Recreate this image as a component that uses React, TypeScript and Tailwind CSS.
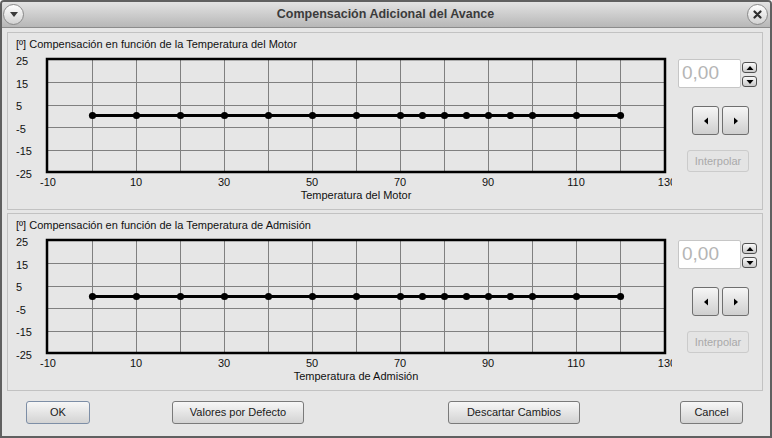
import React from 'react';

const FONT = { fontFamily: '"Liberation Sans", Arial, sans-serif' };
const POINTS = [0, 10, 20, 30, 40, 50, 60, 70, 75, 80, 85, 90, 95, 100, 110, 120];
const GRID_X = [0, 10, 20, 30, 40, 50, 60, 70, 80, 90, 100, 110, 120];
const LABELS_X = [-10, 10, 30, 50, 70, 90, 110, 130];
const LABELS_Y = [25, 15, 5, -5, -15, -25];

const px = (v: number) => 40 + (v + 10) * 4.4;
const py = (v: number) => 64.75 - v * 2.25;

function Chart({ axisTitle }: { axisTitle: string }) {
  return (
    <svg width={664} height={158} className="block" style={FONT}>
      {GRID_X.map((v) => (
        <line key={v} x1={px(v) + 0.5} x2={px(v) + 0.5} y1={8} y2={121} stroke="#808080" strokeWidth={1} />
      ))}
      {[15, 5, -5, -15].map((v) => (
        <line key={v} x1={40} x2={657} y1={Math.round(py(v)) + 0.5} y2={Math.round(py(v)) + 0.5} stroke="#808080" strokeWidth={1} />
      ))}
      <rect x={39} y={8} width={618} height={113} fill="none" stroke="#000" strokeWidth={2.5} />
      <line x1={px(0)} x2={px(120)} y1={64.5} y2={64.5} stroke="#000" strokeWidth={3} />
      {POINTS.map((v) => (
        <circle key={v} cx={px(v) + 0.5} cy={64.5} r={3.6} fill="#000" />
      ))}
      {LABELS_Y.map((v) => (
        <text key={v} x={8} y={py(v) + 1.5} fontSize={11} dominantBaseline="central" fill="#111">
          {v}
        </text>
      ))}
      {LABELS_X.map((v) => (
        <text key={v} x={px(v) + (v === 130 ? 3 : 0)} y={131} fontSize={11} textAnchor="middle" dominantBaseline="central" fill="#111">
          {v}
        </text>
      ))}
      <text x={348} y={144} fontSize={11} textAnchor="middle" dominantBaseline="central" fill="#111">
        {axisTitle}
      </text>
    </svg>
  );
}

function Tri({ dir }: { dir: 'up' | 'down' | 'left' | 'right' }) {
  const d = {
    up: 'M0.5 5 L4 1 L7.5 5 Z',
    down: 'M0.5 1 L4 5 L7.5 1 Z',
    left: 'M5 0.5 L1 4 L5 7.5 Z',
    right: 'M1 0.5 L5 4 L1 7.5 Z',
  }[dir];
  const horiz = dir === 'left' || dir === 'right';
  return (
    <svg width={horiz ? 6 : 8} height={horiz ? 8 : 6} className="block">
      <path d={d} fill="#000" />
    </svg>
  );
}

function SidePanel() {
  return (
    <div className="flex flex-col pt-[26px] ml-[6px]">
      <div className="flex">
        <div className="w-[63px] h-[29px] bg-white border border-[#c6c6c6] rounded-[2px] flex items-center pl-[3px] text-[19px] text-[#b5b5b5]">
          0,00
        </div>
        <div className="flex flex-col ml-[1px] pt-[3px] gap-[3px]">
          <button className="w-[15px] h-[11px] rounded-[3px] border border-[#505050] bg-gradient-to-b from-[#fafafa] to-[#c9c9c9] flex items-center justify-center">
            <Tri dir="up" />
          </button>
          <button className="w-[15px] h-[11px] rounded-[3px] border border-[#505050] bg-gradient-to-b from-[#fafafa] to-[#c9c9c9] flex items-center justify-center">
            <Tri dir="down" />
          </button>
        </div>
      </div>
      <div className="flex ml-[14px] mt-[18px] gap-[3px]">
        <button className="w-[27px] h-[29px] rounded-[3px] border border-[#6f6f6f] bg-gradient-to-b from-[#f6f6f6] to-[#cfcfcf] flex items-center justify-center">
          <Tri dir="left" />
        </button>
        <button className="w-[27px] h-[29px] rounded-[3px] border border-[#6f6f6f] bg-gradient-to-b from-[#f6f6f6] to-[#cfcfcf] flex items-center justify-center">
          <Tri dir="right" />
        </button>
      </div>
      <button className="w-[62px] h-[22px] ml-[9px] mt-[15px] rounded-[3px] border border-[#cbcbcb] bg-[#e4e4e4] text-[11px] text-[#a9a9a9] flex items-center justify-center">
        Interpolar
      </button>
    </div>
  );
}

function Group({ title, axisTitle, className }: { title: string; axisTitle: string; className?: string }) {
  return (
    <div className={`w-[756px] ml-[5px] border border-[#c2c2c2] flex ${className ?? ''}`}>
      <div className="flex flex-col">
        <div className="pl-[8px] pt-[5px] h-[18px] text-[11px] leading-[13px] text-[#111] whitespace-nowrap">{title}</div>
        <Chart axisTitle={axisTitle} />
      </div>
      <SidePanel />
    </div>
  );
}

function DlgButton({ label, w, className }: { label: string; w: string; className?: string }) {
  return (
    <button
      className={`${w} h-[23px] rounded-[3px] border bg-gradient-to-b from-[#f7f7f7] to-[#d3d3d3] text-[11px] text-[#1a1a1a] flex items-center justify-center ${className ?? ''}`}
    >
      {label}
    </button>
  );
}

export default function App() {
  return (
    <div className="w-[772px] h-[438px] bg-[#e6e6e6] border-2 border-[#606060] rounded-t-[4px] flex flex-col overflow-hidden" style={FONT}>
      {/* Title bar */}
      <div className="h-[26px] border-b border-[#8c8c8c] bg-gradient-to-b from-[#e3e3e3] to-[#b7b7b7] flex items-center justify-between px-[1px]">
        <div className="w-[21px] h-[21px] rounded-full border border-[#8a8a8a] bg-gradient-to-b from-[#ffffff] to-[#d2d2d2] flex items-center justify-center">
          <svg width={8} height={5} className="block">
            <path d="M0 0 L8 0 L4 5 Z" fill="#3a3a3a" />
          </svg>
        </div>
        <div className="text-[12.5px] font-bold text-[#3b3b3b]">Compensación Adicional del Avance</div>
        <div className="w-[21px] h-[21px] mr-[1px] rounded-full border border-[#8a8a8a] bg-gradient-to-b from-[#ffffff] to-[#d2d2d2] flex items-center justify-center">
          <svg width={9} height={9} className="block">
            <path d="M1.5 1.5 L7.5 7.5 M7.5 1.5 L1.5 7.5" stroke="#2e2e2e" strokeWidth={2.2} strokeLinecap="round" />
          </svg>
        </div>
      </div>

      <Group
        className="mt-[4px]"
        title="[º] Compensación en función de la Temperatura del Motor"
        axisTitle="Temperatura del Motor"
      />
      <Group
        className="mt-[3px]"
        title="[º] Compensación en función de la Temperatura de Admisión"
        axisTitle="Temperatura de Admisión"
      />

      {/* Dialog buttons */}
      <div className="flex mt-[10px] pl-[24px]">
        <DlgButton label="OK" w="w-[64px]" className="border-[#7d8ea6] from-[#f2f6fb] to-[#cdd6e2]" />
        <DlgButton label="Valores por Defecto" w="w-[132px]" className="ml-[82px] border-[#7a7a7a]" />
        <DlgButton label="Descartar Cambios" w="w-[132px]" className="ml-[144px] border-[#7a7a7a]" />
        <DlgButton label="Cancel" w="w-[63px]" className="ml-[100px] border-[#7a7a7a]" />
      </div>
    </div>
  );
}
